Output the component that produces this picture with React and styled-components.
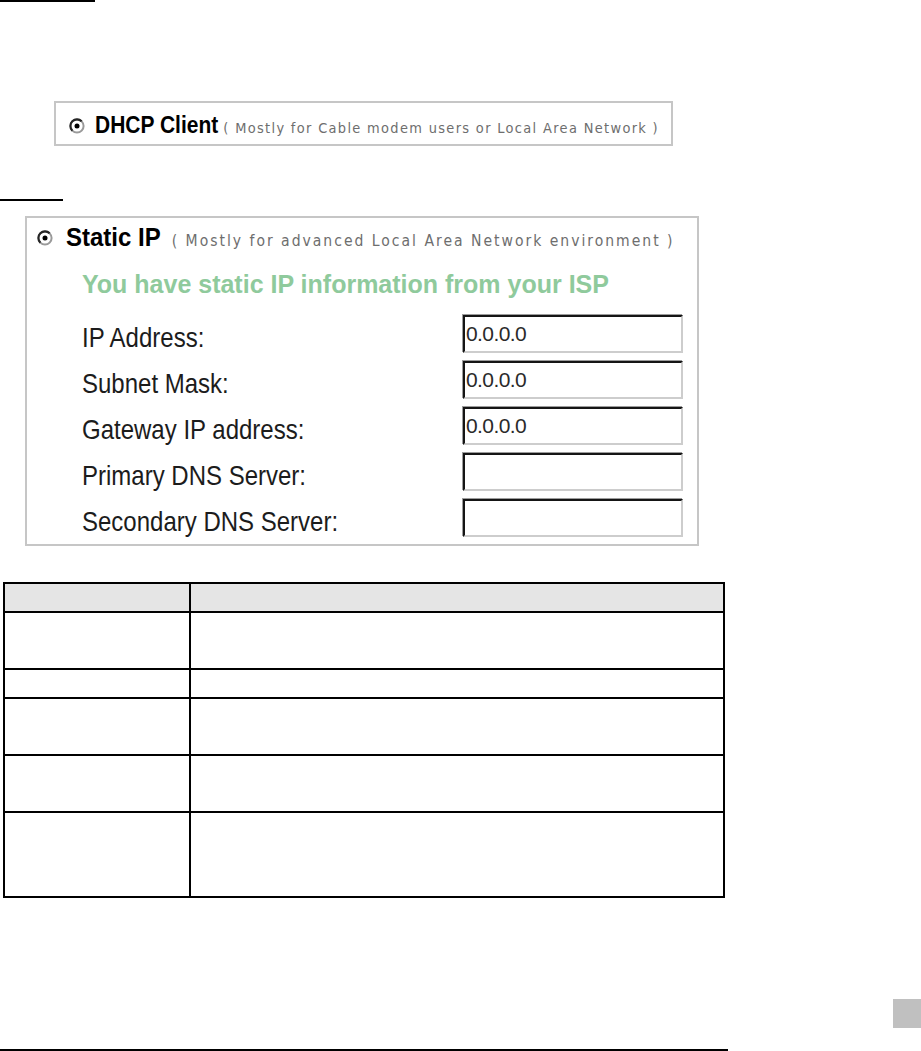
import React from "react";
import styled, { createGlobalStyle } from "styled-components";

const GlobalStyle = createGlobalStyle`
  html, body { margin: 0; padding: 0; background: #fff; }
  body { font-family: "Liberation Sans", Arial, sans-serif; color: #111; }
`;

const Page = styled.div`
  width: 921px;
  height: 1051px;
  display: flex;
  flex-direction: column;
  align-items: flex-start;
  overflow: hidden;
`;

const Rule = styled.div`
  width: ${(p) => p.$w}px;
  height: 2px;
  background: #000;
  margin-top: ${(p) => p.$top || 0}px;
  flex-shrink: 0;
`;

const OptionBox = styled.div`
  box-sizing: border-box;
  margin-top: ${(p) => p.$top}px;
  margin-left: ${(p) => p.$left}px;
  width: ${(p) => p.$w}px;
  height: ${(p) => p.$h}px;
  border: 2px solid #c6c6c6;
  display: flex;
  flex-direction: column;
  padding: ${(p) => p.$pad};
  flex-shrink: 0;
`;

const OptionHead = styled.div`
  display: flex;
  align-items: center;
  gap: ${(p) => p.$gap}px;
`;

const TitleLine = styled.div`
  display: flex;
  align-items: baseline;
  white-space: nowrap;
`;

const Title = styled.span`
  display: inline-block;
  font-weight: 700;
  font-size: ${(p) => p.$size}px;
  line-height: ${(p) => p.$lh}px;
  color: #000;
  transform: scaleY(${(p) => p.$sy});
  transform-origin: 0 ${(p) => p.$origin}px;
`;

const Hint = styled.span`
  display: inline-block;
  font-family: "DejaVu Sans", Verdana, sans-serif;
  font-size: ${(p) => p.$size}px;
  letter-spacing: ${(p) => p.$ls}px;
  color: #6e6e6e;
  margin-left: ${(p) => p.$ml}px;
  transform: scaleY(1.12);
  transform-origin: 0 85%;
`;

const Form = styled.div`
  display: flex;
  flex-direction: column;
  margin-left: 45px;
`;

const Notice = styled.div`
  margin-top: 17px;
  font-weight: 700;
  font-size: 25px;
  line-height: 30px;
  color: #8fca9c;
  white-space: nowrap;
`;

const Fields = styled.div`
  display: flex;
  flex-direction: column;
  gap: 8px;
  margin-top: 16px;
`;

const FieldRow = styled.div`
  display: grid;
  grid-template-columns: 381px 220px;
  align-items: start;
  height: 38px;
`;

const FieldLabel = styled.span`
  display: inline-block;
  font-size: 24px;
  line-height: 38px;
  padding-top: 5px;
  color: #1c1c1c;
  white-space: nowrap;
  transform: scaleY(1.18);
  transform-origin: 0 32px;
`;

const FieldInput = styled.input`
  box-sizing: border-box;
  width: 220px;
  height: 38px;
  margin: 0;
  padding: 0 1px;
  border-style: solid;
  border-width: 2px;
  border-color: #151515 #cdcdcd #cdcdcd #151515;
  box-shadow: -1px -1px 0 #9c9c9c;
  background: #fff;
  font-family: "Liberation Sans", Arial, sans-serif;
  font-size: 21px;
  letter-spacing: -0.6px;
  color: #2a2a2a;
  outline: none;
`;

const Table = styled.div`
  box-sizing: border-box;
  margin-top: 36px;
  margin-left: 3px;
  width: 722px;
  display: grid;
  grid-template-columns: 186px 534px;
  grid-template-rows: 29px 57px 29px 57px 57px 85px;
  border-top: 2px solid #000;
  border-left: 2px solid #000;
  flex-shrink: 0;
`;

const Cell = styled.div`
  box-sizing: border-box;
  border-right: 2px solid #000;
  border-bottom: 2px solid #000;
  background: ${(p) => (p.$head ? "#e5e5e5" : "#fff")};
`;

const Footer = styled.div`
  width: 921px;
  display: flex;
  flex-direction: column;
  margin-top: 101px;
`;

const PageTab = styled.div`
  align-self: flex-end;
  width: 28px;
  height: 29px;
  background: #c0c0c0;
`;

const RadioSvg = styled.svg`
  flex-shrink: 0;
  display: block;
`;

function Radio() {
  return (
    <RadioSvg width="16" height="16" viewBox="0 0 16 16">
      <circle cx="8" cy="8" r="6.6" fill="#fff" stroke="#9a9a9a" strokeWidth="2" />
      <path d="M3.33 12.67 A6.6 6.6 0 0 1 12.67 3.33" fill="none" stroke="#262626" strokeWidth="2.1" />
      <circle cx="8" cy="8" r="2.5" fill="#000" />
    </RadioSvg>
  );
}

const fields = [
  { label: "IP Address:", value: "0.0.0.0" },
  { label: "Subnet Mask:", value: "0.0.0.0" },
  { label: "Gateway IP address:", value: "0.0.0.0" },
  { label: "Primary DNS Server:", value: "" },
  { label: "Secondary DNS Server:", value: "" },
];

const rows = 6;

export default function App() {
  return (
    <>
      <GlobalStyle />
      <Page>
        <Rule $w={95} />

        <OptionBox $top={99} $left={54} $w={619} $h={45} $pad="11px 0 0 13px">
          <OptionHead $gap={10}>
            <Radio />
            <TitleLine>
              <Title $size={21} $lh={24} $sy={1.1} $origin={19}>DHCP Client</Title>
              <Hint $size={13} $ls={1.32} $ml={5}>( Mostly for Cable modem users or Local Area Network )</Hint>
            </TitleLine>
          </OptionHead>
        </OptionBox>

        <Rule $w={63} $top={53} />

        <OptionBox $top={15} $left={25} $w={674} $h={330} $pad="6px 0 0 10px">
          <OptionHead $gap={13}>
            <Radio />
            <TitleLine>
              <Title $size={24} $lh={28} $sy={1.05} $origin={22}>Static IP</Title>
              <Hint $size={14} $ls={1.98} $ml={11}>( Mostly for advanced Local Area Network environment )</Hint>
            </TitleLine>
          </OptionHead>
          <Form>
            <Notice>You have static IP information from your ISP</Notice>
            <Fields>
              {fields.map((f) => (
                <FieldRow key={f.label}>
                  <FieldLabel>{f.label}</FieldLabel>
                  <FieldInput type="text" readOnly defaultValue={f.value} />
                </FieldRow>
              ))}
            </Fields>
          </Form>
        </OptionBox>

        <Table>
          {Array.from({ length: rows }).map((_, r) => (
            <React.Fragment key={r}>
              <Cell $head={r === 0} />
              <Cell $head={r === 0} />
            </React.Fragment>
          ))}
        </Table>

        <Footer>
          <PageTab />
          <Rule $w={728} $top={21} />
        </Footer>
      </Page>
    </>
  );
}
